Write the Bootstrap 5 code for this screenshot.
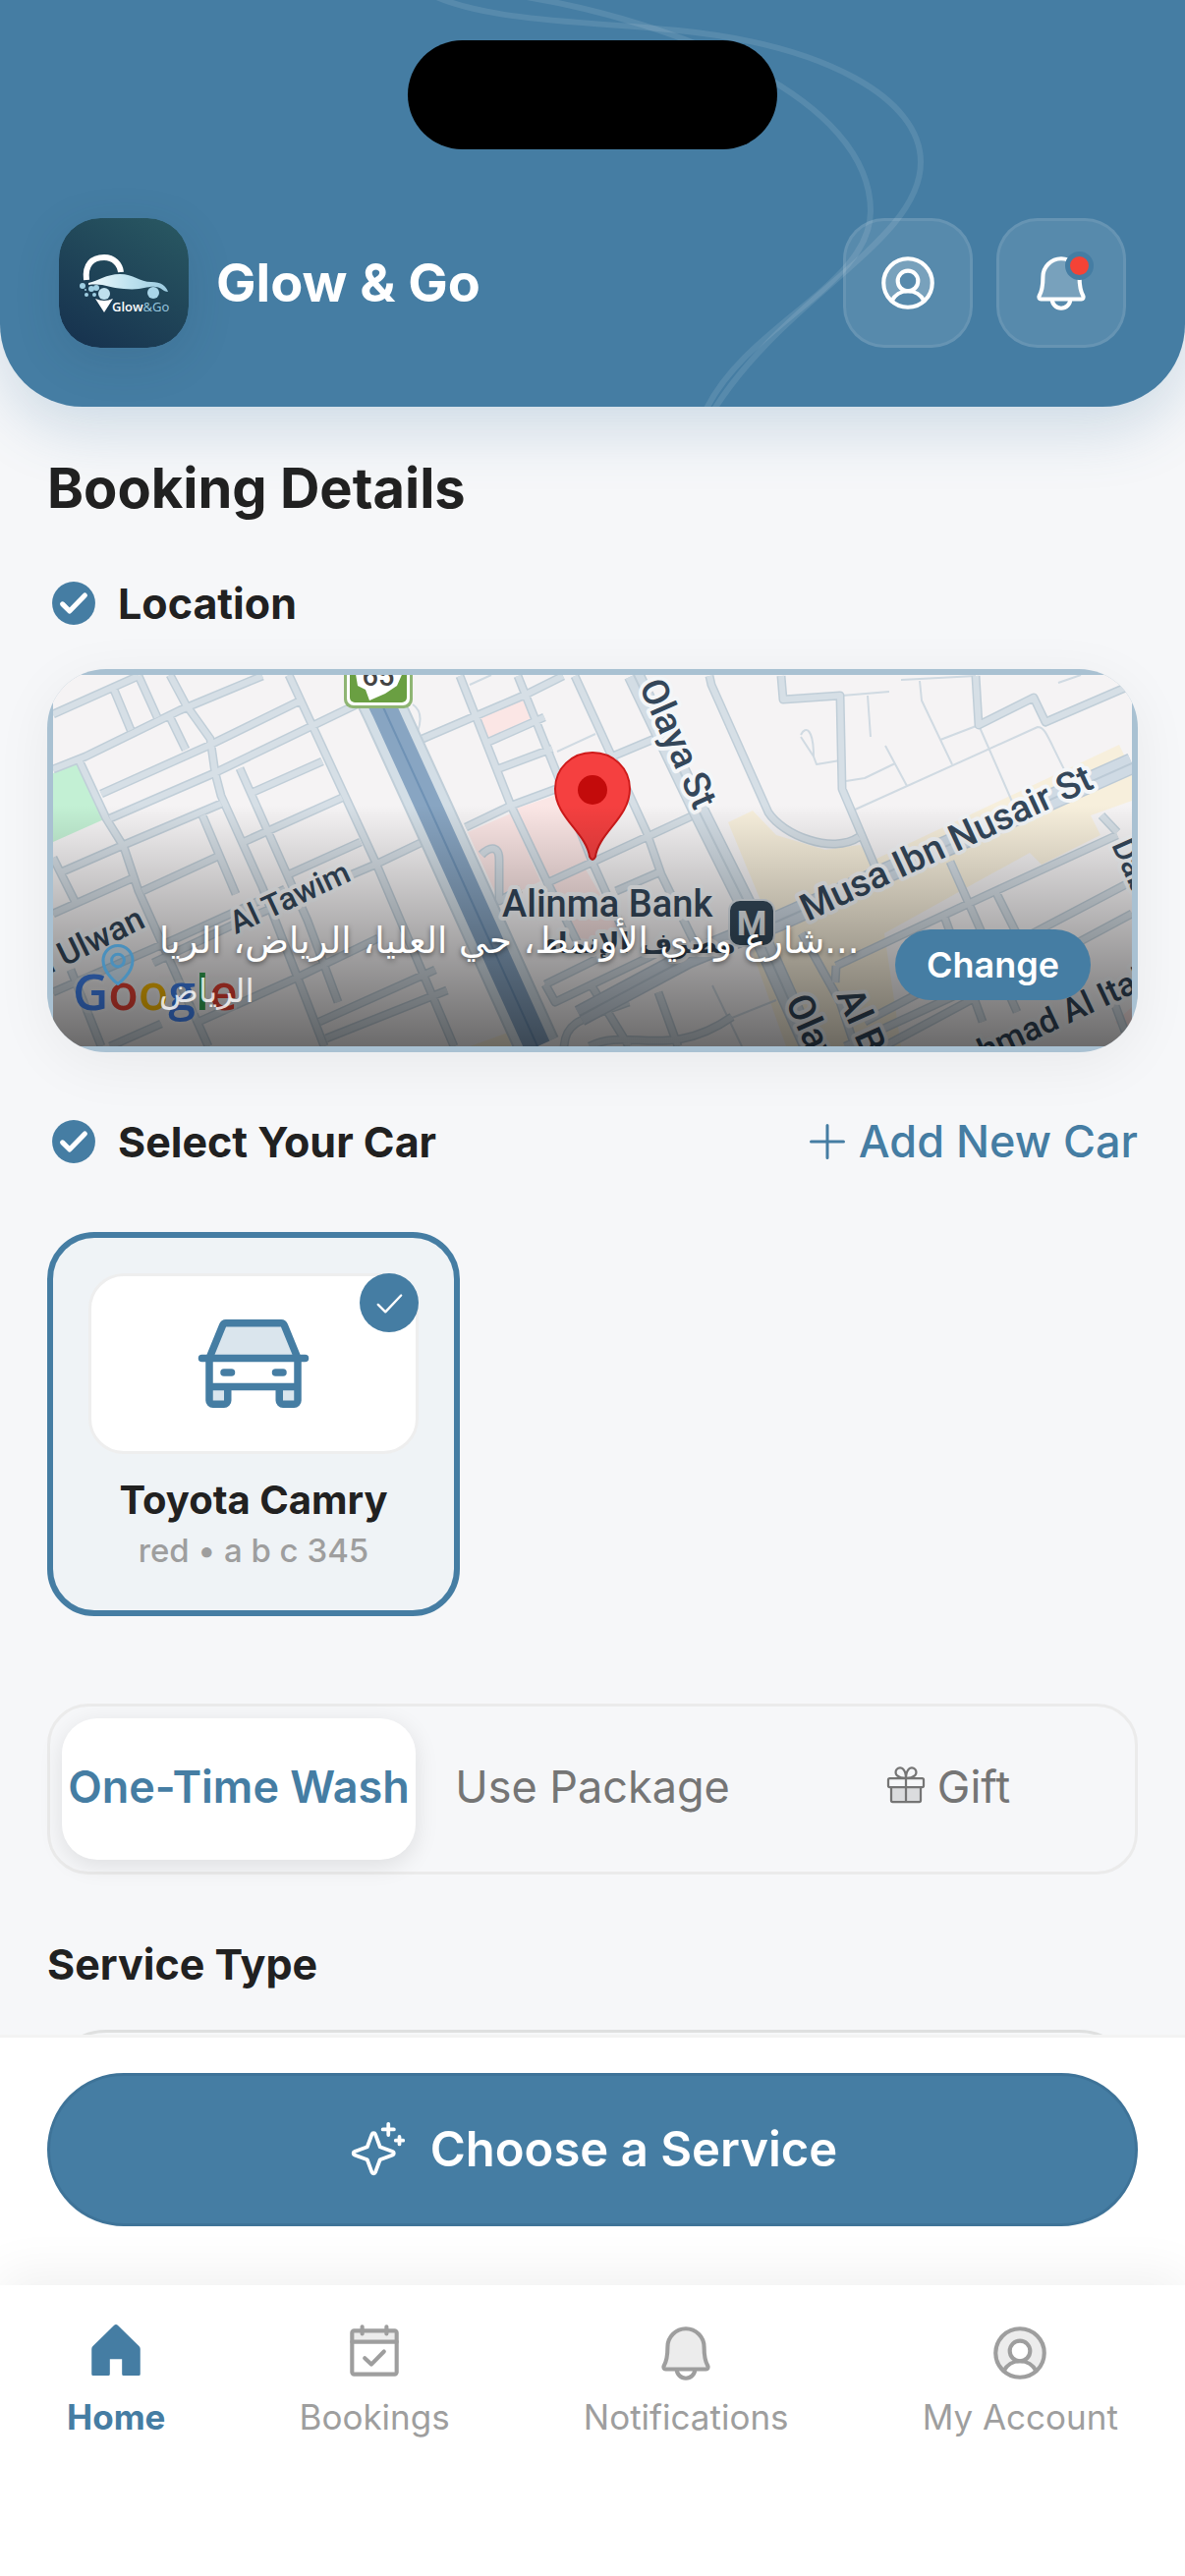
<!DOCTYPE html>
<html lang="en">
<head>
<meta charset="utf-8">
<meta name="viewport" content="width=device-width, initial-scale=1">
<title>Glow &amp; Go</title>
<link href="https://cdn.jsdelivr.net/npm/bootstrap@5.3.0/dist/css/bootstrap.min.css" rel="stylesheet">
<style>
:root{--brand:#457da3;--ink:#212121;--muted:#9e9e9e;--page:#f6f7f9}
body{font-family:Inter,"Noto Sans",sans-serif;color:var(--ink);background:var(--page);line-height:1.2}
svg{display:block;flex:none}
.line-icon{fill:none;stroke:currentColor;stroke-width:16;stroke-linecap:round;stroke-linejoin:round}
.tone{fill:currentColor;stroke:none;opacity:.2}
.app-header{background:var(--brand);border-radius:0 0 84px 84px;padding:222px 60px 60px;box-shadow:0 24px 60px rgba(69,125,163,.22);z-index:2}
.swoosh{left:0;top:0;height:414px;width:100%}
.island{top:41px;left:50%;width:376px;height:111px;margin-left:-188px;background:#000;border-radius:56px}
.app-logo{width:132px;height:132px;border-radius:42px;box-shadow:0 12px 48px rgba(30,60,80,.14)}
.app-name{font-size:54px;font-weight:700}
.icon-btn{width:132px;height:132px;border-radius:42px;background:rgba(255,255,255,.1);border:3px solid rgba(255,255,255,.09);color:#fff}
.icon-btn .tone{opacity:.24}
.alert-dot{width:29px;height:29px;border:5px solid var(--brand);background:#f44336;right:30px;top:31px}
.scroll-area{overflow-y:auto;scrollbar-width:none;min-height:0;padding:41px 48px 0}
.page-title{font-size:56px;font-weight:700;line-height:84px}
.section-head{gap:18px}
.section-title{font-size:43px;font-weight:700;line-height:54px}
.tick{fill:var(--brand)}
.map-card{height:390px;border-radius:60px;padding:6px;background:#a9c1d2;margin-top:40px;box-shadow:0 12px 60px rgba(0,0,0,.06)}
.map-veil{inset:6px;background:linear-gradient(rgba(0,0,0,0) 35%,rgba(0,0,0,.56));padding:32px 42px}
.map-addr{gap:18px}
.addr-main{font:37px/54px "DejaVu Sans",sans-serif;text-shadow:0 2px 5px rgba(0,0,0,.5)}
.addr-sub{font:33px/48px "DejaVu Sans",sans-serif;opacity:.8}
.change-btn{background:var(--brand);color:#fff;font-size:36px;font-weight:600;line-height:72px;padding:0 32px;border:0}
.add-link{color:var(--brand);font-size:45px;font-weight:500;line-height:54px}
.car-card{width:420px;border:6px solid var(--brand);border-radius:48px;background:#eff3f6;padding:36px 36px 37px;margin-top:65px}
.car-pic{height:184px;border:3px solid #eee;border-radius:36px;color:var(--brand)}
.car-tick{width:60px;height:60px;background:var(--brand);right:-3px;top:-3px}
.car-name{font-size:40px;font-weight:700;line-height:54px;margin-top:20px}
.car-meta{font-size:33px;font-weight:500;line-height:48px;color:var(--muted)}
.wash-tabs{border:3px solid #ebebeb;border-radius:42px;padding:12px;margin-top:89px}
.wash-tabs .tab-btn{flex:1 1 0;min-width:0;height:144px;border:0;border-radius:36px;background:none;color:#757575;font-size:45px;font-weight:400;white-space:nowrap;padding:0 0 5px}
.wash-tabs .tab-btn.active{background:#fff;color:var(--brand);font-weight:600;box-shadow:0 6px 24px rgba(0,0,0,.1)}
.service-card{height:300px;border:3px solid #dfe0e0;border-radius:60px;margin-top:40px}
.cta-bar{border-top:3px solid #f3f3f3;padding:36px 48px 60px}
.cta{height:156px;border:3px solid #3e7398;background:var(--brand);color:#fff;font-size:49px;font-weight:600}
.tab-bar{padding:36px 0 138px;box-shadow:0 -12px 48px rgba(0,0,0,.06)}
.tab-bar a{color:var(--muted);font-size:35px;line-height:48px}
.tab-bar a.active{color:var(--brand);font-weight:700}
.halo{paint-order:stroke;stroke:#f4f6f8;stroke-width:8;stroke-linejoin:round;fill:#34475a;font-family:Roboto,sans-serif;font-weight:500}
</style>
</head>
<body>
<svg width="0" height="0" class="position-absolute" aria-hidden="true">
<symbol id="i-user" viewBox="0 0 256 256"><path class="tone" fill-rule="evenodd" d="M128 32a96 96 0 0 0-64.2 167.4A72 72 0 0 1 128 160a72 72 0 0 1 64.2 39.4A96 96 0 0 0 128 32Zm0 48a40 40 0 1 1 0 80 40 40 0 0 1 0-80Z"/><circle cx="128" cy="128" r="96"/><circle cx="128" cy="120" r="40"/><path d="M63.800 199.400a72 72 0 0 1 128.400 0"/></symbol>
<symbol id="i-bell" viewBox="0 0 256 256"><path class="tone" d="M56 104a72 72 0 0 1 144 0c0 35.800 8.300 64.600 14.900 76A8 8 0 0 1 208 192H48a8 8 0 0 1-6.900-12C47.700 168.600 56 139.800 56 104Z"/><path d="M56 104a72 72 0 0 1 144 0c0 35.800 8.300 64.600 14.900 76A8 8 0 0 1 208 192H48a8 8 0 0 1-6.900-12C47.700 168.600 56 139.800 56 104ZM164 192a36 36 0 0 1-72 0"/></symbol>
<symbol id="i-check" viewBox="0 0 256 256"><circle cx="128" cy="128" r="104"/><path d="M74 132l34 34 74-76" fill="none" stroke="#fff" stroke-width="24" stroke-linecap="round" stroke-linejoin="round"/></symbol>
</svg>
<div class="d-flex flex-column vh-100 overflow-hidden">
<header class="app-header position-relative">
  <svg class="swoosh position-absolute" viewBox="0 0 1206 414" preserveAspectRatio="xMidYMin slice" fill="none" stroke="#fff" stroke-opacity=".1" stroke-width="6" aria-hidden="true"><path d="M442-4C500 22 600 22 690 31C840 46 937 100 937 165C937 245 800 300 726 418"/><path d="M530-4C690 22 886 100 886 215C886 290 760 330 718 418"/></svg>
  <div class="island position-absolute"></div>
  <div class="d-flex align-items-center position-relative">
    <svg class="app-logo" viewBox="0 0 132 132" role="img" aria-label="Glow and Go logo">
      <defs><linearGradient id="lg" x1="0.200" y1="1" x2="0.800" y2="0"><stop offset="0" stop-color="#17334f"/><stop offset="1" stop-color="#285661"/></linearGradient><linearGradient id="cg" x1="0" x2="1"><stop offset="0" stop-color="#f2fafd"/><stop offset=".5" stop-color="#bfe3f0"/><stop offset="1" stop-color="#9ccbe0"/></linearGradient></defs>
      <rect width="132" height="132" rx="42" fill="url(#lg)"/>
      <path d="M28 63C26 47 34 40 46 40C56 40 62 47 63 55" fill="none" stroke="#fff" stroke-width="6"/>
      <path d="M30 66C40 64 48 57 62 57C76 57 82 65 94 65C104 65 109 69 111 75C106 75 104 70 98 70C90 69 84 74 66 72C50 71 46 66 30 68Z" fill="url(#cg)"/>
      <circle cx="46" cy="77" r="6" fill="#bfe0ee"/><circle cx="96" cy="76" r="6" fill="#a9d5e8"/>
      <g fill="#9fcfe3"><circle cx="24" cy="69" r="3"/><circle cx="33" cy="72" r="3"/><circle cx="28" cy="78" r="2"/><circle cx="36" cy="78" r="2"/><circle cx="27" cy="73" r="1"/><circle cx="38" cy="71" r="3"/></g>
      <path d="M37 82q9 4 18 0L46 96Z" fill="#fff"/>
      <text x="54" y="95" font-family="Open Sans, sans-serif" font-weight="600" font-size="13" fill="#fff">Glow<tspan fill="#9ccbe0" font-weight="400">&amp;Go</tspan></text>
    </svg>
    <div class="app-name text-white ms-4 ps-1">Glow &amp; Go</div>
    <div class="d-flex gap-4 ms-auto">
      <button type="button" class="icon-btn d-flex align-items-center justify-content-center" aria-label="Profile"><svg class="line-icon" width="66" height="66"><use href="#i-user"/></svg></button>
      <button type="button" class="icon-btn d-flex align-items-center justify-content-center position-relative" aria-label="Notifications"><svg class="line-icon" width="66" height="66"><use href="#i-bell"/></svg><span class="alert-dot position-absolute rounded-circle"></span></button>
    </div>
  </div>
</header>

<main class="scroll-area flex-grow-1">
  <h1 class="page-title mb-5">Booking Details</h1>
  <div class="section-head d-flex align-items-center"><svg class="tick" width="54" height="54"><use href="#i-check"/></svg><h2 class="section-title m-0">Location</h2></div>

  <div class="map-card position-relative overflow-hidden">
    <svg width="100%" height="100%" viewBox="54 687 1098 378" preserveAspectRatio="xMidYMid slice" role="img" aria-label="Map of Olaya, Riyadh">
      <defs>
        <path id="streets" d="M54 727L141 688M54 783L87 770L183 723L267 688M103 808L210 760L306 713M112 833L218 787L363 717M64 887L126 860L225 818M54 930L137 893M145 907L221 872M256 807L328 775M248 857L348 812M294 890L367 857M156 980L240 940L382 880L430 857M54 1010L180 955L290 905M202 1040L298 997L385 955M112 1065L164 1042M325 1040L443 987M332 1057L455 1008M80 773L108 833L126 862L141 907L212 1065M173 687L189 717L214 752L219 787L225 810L267 903L330 1065M294 687L382 877L462 1065M244 782L313 937L344 1020M206 830L240 910M116 702L133 743M141 688L160 730M173 730L189 763M54 873L76 917M72 987L103 1065M468 688L520 820L558 900L588 960M527 688L604 880L640 960M585 688L658 847L673 890L712 970M430 752L535 707L573 688M493 757L554 730M506 783L562 762M474 842L520 820L566 803M554 900L604 877L712 827M623 770L666 752M627 907L673 887M490 870C500 860 508 862 508 875L508 917L530 905M555 1002L620 970M555 1002L565 1020L690 960M574 1065C576 1040 590 1038 640 1020M640 1065L600 1000M670 1010L690 1065M600 1065C640 1045 680 1080 745 1035M722 688L724 697L782 827C797 850 847 870 874 852M795 688L797 712L855 708L857 803L894 890M993 688L996 738L1052 710L1064 735L1152 697M851 983L1000 913L1137 850M851 983L850 1000M900 1065L1152 930M880 1040L1152 897M967 877L1035 1030M1121 830L1137 847M1013 907L1056 993M960 930L1000 1040M816 950L855 1020L870 1065M860 1065L990 1005M1130 1010L1145 1050"/>
        <path id="olaya" d="M645 687L712 827L762 927L824 1065"/>
        <path id="musa" d="M590 1034L700 975L793 937L1152 777"/>
        <path id="highway" d="M374 687L391 722L439 827L547 1065"/>
      </defs>
      <rect x="54" y="687" width="1098" height="378" fill="#f5f3f4"/>
      <path fill="#c3f0d4" d="M54 787L80 777L108 833L54 857Z"/>
      <path fill="#fbe6e5" d="M485 727L535 708L543 730L495 752ZM476 847L520 828L550 897L508 917ZM525 823L573 807L600 875L558 893ZM562 900L596 885L640 960L590 955ZM1135 1040L1152 1025V1060Z"/>
      <path fill="#f7efdc" d="M741 837L766 825L790 850L840 865L875 860L890 875L1139 758L1152 785V815L1110 830L1120 850L1060 880L1048 868L990 900L900 950L917 1065H800L766 970L785 943ZM478 1065L520 1050V1065Z"/>
      <g fill="none" stroke-linejoin="round">
        <path stroke="#d0dae2" stroke-width="2" d="M917 692L993 688M936 693L938 713L969 778M996 738L1034 825M957 753L996 738M883 708L886 750M857 708L905 704M901 759L923 800M861 795L880 792L911 777M868 825L1056 740C1064 740 1066 750 1085 787M815 748C820 738 828 742 828 770L815 750M828 770L831 778L855 774M478 697L500 687M567 765L606 747M725 1003L755 1065M735 1040L790 1018M420 717Q432 725 425 745M1077 695L1100 687"/>
        <use href="#streets" stroke="#c0ced8" stroke-width="9"/><use href="#streets" stroke="#d6dfe6" stroke-width="6"/>
        <use href="#olaya" stroke="#bfcdd7" stroke-width="21"/><use href="#olaya" stroke="#d3dde5" stroke-width="18"/><use href="#olaya" stroke="#bfcdd7" stroke-width="2"/>
        <use href="#musa" stroke="#bccad6" stroke-width="22"/><use href="#musa" stroke="#cfdae4" stroke-width="19"/><use href="#musa" stroke="#bccad6" stroke-width="2"/>
        <use href="#highway" stroke="#c0ced8" stroke-width="47"/><use href="#highway" stroke="#d3dee6" stroke-width="43"/><use href="#highway" stroke="#88a5c2" stroke-width="27"/><use href="#highway" stroke="#6f92b5" stroke-width="2"/>
      </g>
      <rect x="350" y="660" width="70" height="61" rx="9" fill="#8fb573"/><rect x="353" y="660" width="64" height="58" rx="7" fill="#fff"/><rect x="356" y="660" width="58" height="55" rx="5" fill="#6a9f42"/><path d="M361 680L364 698L372 702L376 713L392 706L404 698L412 680Z" fill="#fff"/>
      <text x="385" y="698" text-anchor="middle" font-family="Roboto, sans-serif" font-weight="500" font-size="29" fill="#444">65</text>
      <g class="halo" font-size="38">
        <text x="511" y="933">Alinma Bank</text>
        <text x="553" y="970" font-size="29" font-weight="700" font-family="DejaVu Sans, sans-serif">مصرف الإنماء</text>
        <text transform="translate(240 951) rotate(-25)" font-size="32">Al Tawim</text>
        <text transform="translate(41 996) rotate(-26)" font-size="34">h Ulwan</text>
        <text transform="translate(650 698) rotate(66)">Olaya St</text>
        <text transform="translate(822 938) rotate(-25)">Musa Ibn Nusair St</text>
        <text transform="translate(1131 860) rotate(66)" font-size="32">Dabab</text>
        <text transform="translate(799 1019) rotate(66)">Olaya</text>
        <text transform="translate(851 1013) rotate(66)">Al Batha</text>
        <text transform="translate(1002 1082) rotate(-25)" font-size="34">hmad Al Itali</text>
      </g>
      <rect x="742" y="916" width="46" height="47" rx="11" fill="#34495a" stroke="#dbe2e8" stroke-width="2"/>
      <text x="765" y="952" text-anchor="middle" font-family="Roboto, sans-serif" font-weight="700" font-size="35" fill="#e2e7ea">M</text>
      <text x="74" y="1028" font-family="Open Sans, sans-serif" font-weight="600" font-size="50" stroke="#fff" stroke-opacity=".25" stroke-width="6" paint-order="stroke"><tspan fill="#4285f4">G</tspan><tspan fill="#ea4335">o</tspan><tspan fill="#fbbc05">o</tspan><tspan fill="#4285f4">g</tspan><tspan fill="#34a853">l</tspan><tspan fill="#ea4335">e</tspan></text>
      <path d="M603 766C624 766 641 782 641 803C641 832 609 848 606 872Q603 878 600 872C597 848 565 832 565 803C565 782 582 766 603 766Z" fill="#f54040" stroke="#cf1a1a" stroke-width="2"/><circle cx="603" cy="804" r="15" fill="#c30b0b"/>
    </svg>
    <div class="map-veil position-absolute d-flex align-items-end">
      <div class="map-addr d-flex align-items-center w-100 text-white">
        <svg class="line-icon" width="48" height="48" viewBox="0 0 256 256" color="#4a90bd"><path class="tone" d="M128 16a88 88 0 0 0-88 88c0 80 88 136 88 136s88-56 88-136a88 88 0 0 0-88-88Z"/><circle cx="128" cy="104" r="34"/><path d="M208 104c0 72-80 128-80 128s-80-56-80-128a80 80 0 0 1 160 0Z"/></svg>
        <div class="text-nowrap"><div class="addr-main">شارع وادي الأوسط، حي العليا، الرياض، الريا...</div><div class="addr-sub">الرياض</div></div>
        <button type="button" class="change-btn rounded-pill ms-auto">Change</button>
      </div>
    </div>
  </div>

  <div class="section-head d-flex align-items-center mt-5 pt-3">
    <svg class="tick" width="54" height="54"><use href="#i-check"/></svg><h2 class="section-title m-0">Select Your Car</h2>
    <a href="#" class="add-link d-flex align-items-center text-decoration-none ms-auto gap-2"><svg class="line-icon" width="48" height="48" viewBox="0 0 256 256"><path d="M40 128H216M128 40V216"/></svg>Add New Car</a>
  </div>

  <div class="car-card text-center">
    <div class="car-pic bg-white position-relative d-flex align-items-center justify-content-center">
      <svg class="line-icon" width="120" height="120" viewBox="0 0 256 256"><path class="tone" d="M32 116L60 44Q62 40 66 40H190Q194 40 196 44L224 116ZM32 176H72V208Q72 216 64 216H40Q32 216 32 208ZM184 176H224V208Q224 216 216 216H192Q184 216 184 208Z"/><path d="M16 116H240M32 116L61 45Q63 40 68 40H188Q193 40 195 45L224 116V208a8 8 0 0 1-8 8H192a8 8 0 0 1-8-8V178M72 178V208a8 8 0 0 1-8 8H40a8 8 0 0 1-8-8V116M32 178H224M64 147H80M176 147H192"/></svg>
      <span class="car-tick position-absolute rounded-circle d-flex align-items-center justify-content-center text-white"><svg class="line-icon" width="30" height="30" viewBox="0 0 256 256"><path stroke-width="20" d="M32 144L96 208L232 64"/></svg></span>
    </div>
    <div class="car-name">Toyota Camry</div>
    <div class="car-meta">red • a b c 345</div>
  </div>

  <div class="wash-tabs d-flex" role="tablist">
    <button type="button" role="tab" class="tab-btn active" aria-selected="true">One-Time Wash</button>
    <button type="button" role="tab" class="tab-btn" aria-selected="false">Use Package</button>
    <button type="button" role="tab" class="tab-btn d-flex align-items-center justify-content-center gap-2" aria-selected="false"><svg class="line-icon" width="48" height="48" viewBox="0 0 256 256"><path class="tone" d="M48 128H208V208H48Z"/><path stroke-width="12" d="M40 80H216a8 8 0 0 1 8 8V120a8 8 0 0 1-8 8H40a8 8 0 0 1-8-8V88a8 8 0 0 1 8-8ZM208 128V200a8 8 0 0 1-8 8H56a8 8 0 0 1-8-8V128M128 80V208M128 80S128 48 143 31C152 21 168 22 177 31C186 40 186 56 177 65C160 80 128 80 128 80S96 80 79 65C70 56 70 40 79 31C88 22 104 21 113 31C128 48 128 80 128 80"/></svg>Gift</button>
  </div>

  <h2 class="section-title mb-0 mt-5 pt-3">Service Type</h2>
  <div class="service-card"></div>
</main>

<div class="cta-bar bg-white">
  <button type="button" class="cta rounded-pill w-100 d-flex align-items-center justify-content-center gap-4"><svg class="line-icon" width="60" height="60" viewBox="0 0 256 256"><path d="M84.300 171.700L29.200 151.400a8 8 0 0 1 0-14.900L84.300 116.300L104.600 61.200a8 8 0 0 1 14.900 0L139.700 116.300L194.800 136.600a8 8 0 0 1 0 14.900L139.700 171.700L119.400 226.800a8 8 0 0 1-14.900 0ZM176 16V64M152 40H200M224 72V104M208 88H240"/></svg>Choose a Service</button>
</div>
<nav class="tab-bar bg-white d-flex justify-content-around position-relative">
  <a href="#" class="active d-flex flex-column align-items-center gap-2 text-decoration-none" aria-current="page"><svg width="66" height="66" viewBox="0 0 256 256" fill="currentColor"><path d="M32 112Q32 106 36 102L120 19Q128 12 136 19L220 102Q224 106 224 112V211Q224 217 218 217H158Q152 217 152 211V152H104V211Q104 217 98 217H38Q32 217 32 211Z"/></svg>Home</a>
  <a href="#" class="d-flex flex-column align-items-center gap-2 text-decoration-none"><svg class="line-icon" width="66" height="66" viewBox="0 0 256 256"><path class="tone" d="M40 40H216V84H40Z"/><rect x="40" y="40" width="176" height="172" rx="8"/><path d="M80 24V52M176 24V52M40 84H216M90 148L116 173L166 122"/></svg>Bookings</a>
  <a href="#" class="d-flex flex-column align-items-center gap-2 text-decoration-none"><svg class="line-icon" width="66" height="66"><use href="#i-bell"/></svg>Notifications</a>
  <a href="#" class="d-flex flex-column align-items-center gap-2 text-decoration-none"><svg class="line-icon" width="66" height="66"><use href="#i-user"/></svg>My Account</a>
</nav>
</div>
<script src="https://cdn.jsdelivr.net/npm/bootstrap@5.3.0/dist/js/bootstrap.bundle.min.js"></script>
</body>
</html>
